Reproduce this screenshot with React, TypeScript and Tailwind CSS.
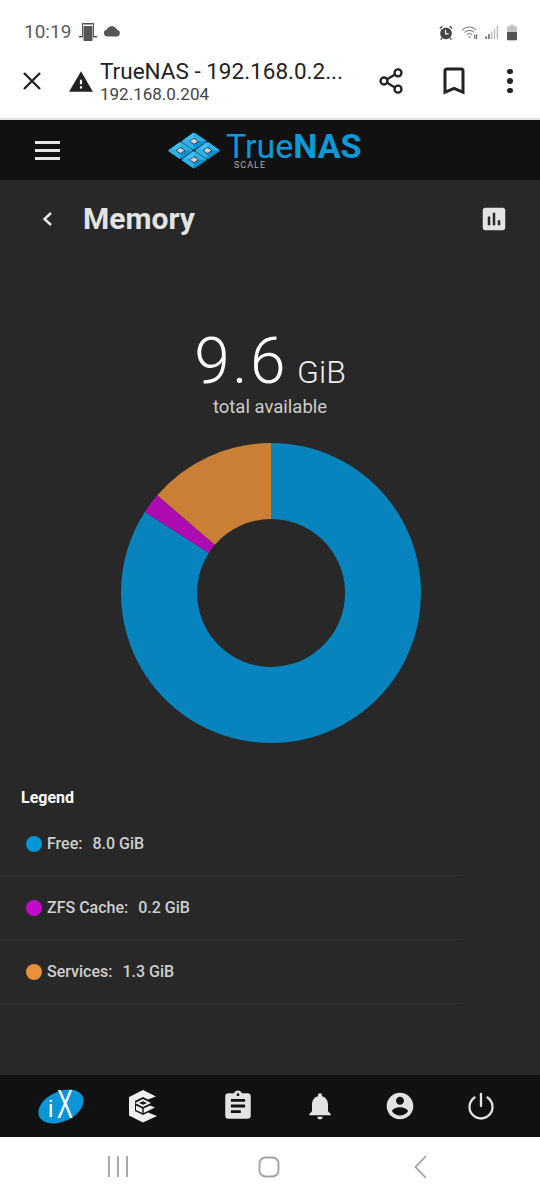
import { Share2 } from "lucide-react";

const cells = [
  [27, 9.25],
  [13.5, 18.5],
  [40.5, 18.5],
  [27, 27.75],
];

function TrueNasMark() {
  return (
    <svg width="54" height="37" viewBox="0 0 54 37">
      {cells.map(([x, y]) => (
        <g key={`${x}-${y}`} transform={`translate(${x} ${y})`}>
          <polygon points="0,-2.700 4,0 0,2.700 -4,0" fill="#cfcfcf" />
          <polygon points="-12.5,0 -0.5,-8.8 2.5,-4.8 -5.500,0.3" fill="#3fc0f2" />
          <polygon points="0.5,-8.7 12.7,-0.3 6.900,1.900 0,-3.800" fill="#2bb0e8" />
          <polygon points="12.5,0.5 0.5,8.8 -2.5,4.8 5.500,-0.3" fill="#0f8fce" />
          <polygon points="-0.5,8.7 -12.7,0.3 -6.900,-1.900 0,3.800" fill="#2fb0e8" />
        </g>
      ))}
    </svg>
  );
}

function IxLogo() {
  return (
    <svg className="overflow-visible" width="46" height="35" viewBox="0 0 46 35">
      <ellipse cx="23" cy="17.500" rx="24" ry="15" transform="rotate(-25 23 17.500)" fill="#0a95d6" />
      <text x="10" y="28" fontFamily="'Liberation Sans', sans-serif" fontSize="24" fill="#fff">i</text>
      <text fontFamily="'Liberation Sans', sans-serif" fontSize="40" fill="#fff" transform="translate(19 29) scale(0.6 1)">X</text>
    </svg>
  );
}

function CubeIcon() {
  return (
    <svg width="30" height="34" viewBox="0 0 30 34" fill="none">
      <path d="M15 1 L28 7.500 L20 10.500 L15 8 L7 12 V22 L15 26 L20 23.500 L29 27 L15 33.500 L1 26.500 V8 Z" fill="#eeeeee" />
      <path d="M15 10 L23 14 L15 18 L7 14 Z" fill="#eeeeee" />
      <path d="M15 12.300 L19 14 L15 15.800 L11 14 Z" fill="#111111" />
      <path d="M8 16.500 L14.300 19.600 V24 L8 21 Z M22 16.500 L15.700 19.600 V24 L27 18.500 Z" fill="#eeeeee" />
    </svg>
  );
}

function StatusLeft() {
  return (
    <div className="flex items-center">
      <span className="text-[19px] leading-none text-[#5a5a5a]">10:19</span>
      <svg className="ml-[7px]" width="20" height="20" viewBox="0 0 20 20">
        <path d="M1 15h3V2h12v13h3v1.500h-4V3.500H5v13H1z" fill="#555" />
        <rect x="5.500" y="5" width="9" height="15" fill="#555" />
      </svg>
      <svg className="ml-[5px]" width="18" height="12" viewBox="0 0 18 12">
        <path d="M4.500 11.500a3.500 3.500 0 0 1-.6-6.950A5.500 5.500 0 0 1 14 4.800a3.400 3.400 0 0 1 0 6.700z" fill="#555" />
      </svg>
    </div>
  );
}

function StatusRight() {
  return (
    <div className="flex items-center">
      <svg width="16" height="17" viewBox="0 0 18 18">
        <path d="M1.500 4 4.500 1.300l1 1.200L2.500 5.200zM16.500 4l-3-2.700-1 1.200 3 2.700z" fill="#444" />
        <circle cx="9" cy="10" r="6.500" fill="#444" />
        <path d="M8.500 6v4.500H12" stroke="#fff" strokeWidth="1.300" fill="none" />
        <path d="M4.500 15 3 17M13.500 15l1.500 2" stroke="#444" strokeWidth="1.500" />
      </svg>
      <svg className="ml-[7px]" width="19" height="17" viewBox="0 0 20 18" fill="none" stroke="#8a8a8a" strokeWidth="1.100">
        <path d="M1 6.500C5.500 2 12 2 16 6.500M3.500 9c3-3 7.500-3 10.500 0M6 11.500c1.800-1.700 4-1.700 5.800 0" />
        <circle cx="9" cy="14" r="1" fill="#8a8a8a" stroke="none" />
        <path d="M14.500 16v-5M16.500 11v5" stroke="#555" />
      </svg>
      <svg className="ml-[5px]" width="14" height="15" viewBox="0 0 15 16">
        <rect x="0.500" y="12" width="1.500" height="3" fill="#555" />
        <rect x="3.500" y="9.500" width="1.500" height="5.500" fill="#555" />
        <rect x="6.500" y="7" width="1.500" height="8" fill="#bbb" />
        <rect x="9.500" y="4" width="1.500" height="11" fill="#bbb" />
        <rect x="12.500" y="1" width="1.500" height="14" fill="#bbb" />
      </svg>
      <svg className="ml-[8px]" width="10" height="17" viewBox="0 0 11 17">
        <path d="M3.500 0h4v1.500H10a1 1 0 0 1 1 1V16a1 1 0 0 1-1 1H1a1 1 0 0 1-1-1V2.500a1 1 0 0 1 1-1h2.500z" fill="#c4c4c4" />
        <path d="M0 8h11v8a1 1 0 0 1-1 1H1a1 1 0 0 1-1-1z" fill="#555" />
      </svg>
    </div>
  );
}

function Toolbar() {
  return (
    <div className="flex h-[70px] items-center border-b-2 border-[#e2e2e2] bg-white pb-[6px]">
      <svg className="ml-[22px]" width="20" height="20" viewBox="0 0 20 20" fill="none" stroke="#222" strokeWidth="2.300">
        <path d="M2 2l16 16M18 2 2 18" />
      </svg>
      <svg className="ml-[26px] mt-[2px]" width="26" height="26" viewBox="0 0 24 24" fill="#222">
        <path d="M1 21h22L12 2 1 21zm12-3h-2v-2h2v2zm0-4h-2v-4h2v4z" />
      </svg>
      <div className="ml-[6px] flex w-[262px] flex-col">
        <span className="text-[22.500px] leading-[26px] text-[#222]">TrueNAS - 192.168.0.2...</span>
        <span className="text-[17px] leading-[20px] text-[#444]">192.168.0.204</span>
      </div>
      <Share2 className="ml-[15px]" size={28} color="#222" strokeWidth={2} />
      <svg className="ml-[31px]" width="36" height="36" viewBox="0 0 24 24" fill="#222">
        <path d="M17 3H7c-1.100 0-2 .9-2 2v16l7-3 7 3V5c0-1.100-.9-2-2-2zm0 15l-5-2.180L7 18V5h10v13z" />
      </svg>
      <div className="ml-[35px] flex flex-col gap-[4px]">
        <div className="h-[5.500px] w-[5.500px] rounded-full bg-[#222]" />
        <div className="h-[5.500px] w-[5.500px] rounded-full bg-[#222]" />
        <div className="h-[5.500px] w-[5.500px] rounded-full bg-[#222]" />
      </div>
    </div>
  );
}

function TopNav() {
  return (
    <div className="flex h-[60px] items-center bg-[#111111]">
      <div className="ml-[35px] flex w-[25px] flex-col gap-[5px]">
        <div className="h-[3px] bg-[#e6e6e6]" />
        <div className="h-[3px] bg-[#e6e6e6]" />
        <div className="h-[3px] bg-[#e6e6e6]" />
      </div>
      <div className="ml-[107px]">
        <TrueNasMark />
      </div>
      <div className="ml-[5px] flex flex-col">
        <div className="text-[34px] leading-[30px] text-[#0a9ad9]">
          True<span className="font-bold">NAS</span>
        </div>
        <div className="ml-[8px] text-[9px] leading-[9px] tracking-[1px] text-[#b0b0b0]">SCALE</div>
      </div>
    </div>
  );
}

function Donut() {
  // center 150,150 — free 84.1%, zfs 2.1%, services 13.8%
  return (
    <svg width="300" height="300" viewBox="0 0 300 300">
      <path d="M150 0A150 150 0 1 1 23.800 68.900L87.800 110A74 74 0 1 0 150 76Z" fill="#0784bd" />
      <path d="M23.800 68.900A150 150 0 0 1 36.300 52.300L93.900 101.800A74 74 0 0 0 87.800 110Z" fill="#ad0cb3" />
      <path d="M36.300 52.300A150 150 0 0 1 150 0V76A74 74 0 0 0 93.900 101.800Z" fill="#c98036" />
    </svg>
  );
}

const legendItems = [
  { label: "Free:", value: "8.0 GiB", dot: "bg-[#0095d5]" },
  { label: "ZFS Cache:", value: "0.2 GiB", dot: "bg-[#c10acb]" },
  { label: "Services:", value: "1.3 GiB", dot: "bg-[#e79139]" },
];

function Legend() {
  return (
    <div className="mt-[45px]">
      <div className="pl-[21px] text-[16px] leading-[20px] font-bold text-white">Legend</div>
      <div className="w-[460px] pt-[4px]">
        {legendItems.map((item) => (
          <div key={item.label} className="flex h-[64px] items-center border-b border-[#333333] pl-[26px]">
            <div className={`h-[16px] w-[16px] rounded-full ${item.dot}`} />
            <span className="ml-[5px] text-[16px] font-medium text-[#cfcfcf]">{item.label}</span>
            <span className="ml-[10px] text-[16px] font-medium text-[#cfcfcf]">{item.value}</span>
          </div>
        ))}
      </div>
    </div>
  );
}

function MainPanel() {
  return (
    <div className="flex h-[895px] flex-col bg-[#282828]">
      <div className="flex h-[76px] items-center pt-[1px]">
        <svg className="ml-[41px]" width="12" height="16" viewBox="0 0 12 16" fill="none" stroke="#e8e8e8" strokeWidth="2.400">
          <path d="M10 2 3.500 8l6.500 6" />
        </svg>
        <span className="ml-[30px] text-[30px] font-bold text-[#e4e4e4]">Memory</span>
        <svg className="ml-auto mr-[31px]" width="30" height="30" viewBox="0 0 24 24" fill="#e4e4e4">
          <path d="M19 3H5c-1.100 0-2 .9-2 2v14c0 1.100.9 2 2 2h14c1.100 0 2-.9 2-2V5c0-1.100-.9-2-2-2zM9 17H7v-7h2v7zm4 0h-2V7h2v10zm4 0h-2v-4h2v4z" />
        </svg>
      </div>
      <div className="mt-[71px] flex h-[69px] items-baseline justify-center text-white">
        <span className="text-[64px] leading-[70px] font-light tracking-[2.5px]">9.6</span>
        <span className="ml-[9px] text-[32px] font-light text-[#eeeeee]">GiB</span>
      </div>
      <div className="text-center text-[18.500px] leading-[22px] text-[#cccccc]">total available</div>
      <div className="mt-[25px] flex justify-center pl-[2px]">
        <Donut />
      </div>
      <Legend />
    </div>
  );
}

function BottomNav() {
  return (
    <div className="flex h-[62px] items-center bg-[#111111]">
      <div className="ml-[38px]">
        <IxLogo />
      </div>
      <div className="ml-[44px]">
        <CubeIcon />
      </div>
      <svg className="ml-[63px]" width="34" height="34" viewBox="0 0 24 24" fill="#e2e2e2">
        <path d="M19 3h-4.180C14.400 1.840 13.300 1 12 1c-1.300 0-2.400.84-2.820 2H5c-1.100 0-2 .9-2 2v14c0 1.100.9 2 2 2h14c1.100 0 2-.9 2-2V5c0-1.100-.9-2-2-2zm-7 0c.55 0 1 .45 1 1s-.45 1-1 1-1-.45-1-1 .45-1 1-1zm2 14H7v-2h7v2zm3-4H7v-2h10v2zm0-4H7V7h10v2z" />
      </svg>
      <svg className="ml-[49px]" width="32" height="32" viewBox="0 0 24 24" fill="#e2e2e2">
        <path d="M12 22c1.100 0 2-.9 2-2h-4c0 1.100.89 2 2 2zm6-6v-5c0-3.070-1.640-5.640-4.500-6.320V4c0-.83-.67-1.500-1.500-1.500s-1.500.67-1.500 1.500v.68C7.630 5.360 6 7.920 6 11v5l-2 2v1h16v-1l-2-2z" />
      </svg>
      <svg className="ml-[48px]" width="32" height="32" viewBox="0 0 24 24" fill="#e2e2e2">
        <path d="M12 2C6.480 2 2 6.480 2 12s4.480 10 10 10 10-4.480 10-10S17.520 2 12 2zm0 3c1.660 0 3 1.340 3 3s-1.340 3-3 3-3-1.340-3-3 1.340-3 3-3zm0 14.200c-2.500 0-4.710-1.280-6-3.220.03-1.990 4-3.080 6-3.080 1.990 0 5.970 1.090 6 3.080-1.290 1.940-3.500 3.220-6 3.220z" />
      </svg>
      <svg className="ml-[51px]" width="28" height="28" viewBox="0 0 28 28" fill="none" stroke="#e2e2e2" strokeWidth="2.300" strokeLinecap="round">
        <path d="M14 2v12" />
        <path d="M7.500 5.500a11.500 11.500 0 1 0 13 0" />
      </svg>
    </div>
  );
}

function AndroidNav() {
  return (
    <div className="flex h-[63px] items-center bg-white pb-[4px]">
      <svg className="ml-[107px]" width="22" height="22" viewBox="0 0 22 22" stroke="#a0a0a0" strokeWidth="1.800">
        <path d="M2 0v21M11 0v21M20 0v21" />
      </svg>
      <svg className="ml-[129px]" width="22" height="22" viewBox="0 0 22 22" fill="none" stroke="#a0a0a0" strokeWidth="1.800">
        <rect x="1.500" y="1.500" width="19" height="19" rx="6" />
      </svg>
      <svg className="ml-[133px]" width="16" height="24" viewBox="0 0 16 24" fill="none" stroke="#a0a0a0" strokeWidth="1.800">
        <path d="M13 1 2.500 12 13 23" />
      </svg>
    </div>
  );
}

export default function App() {
  return (
    <div className="flex h-[1200px] w-[540px] flex-col overflow-hidden bg-white font-['Roboto',sans-serif]">
      <div className="flex h-[50px] items-end justify-between bg-white pb-[9px] pl-[24px] pr-[23px]">
        <StatusLeft />
        <StatusRight />
      </div>
      <Toolbar />
      <TopNav />
      <MainPanel />
      <BottomNav />
      <AndroidNav />
    </div>
  );
}
